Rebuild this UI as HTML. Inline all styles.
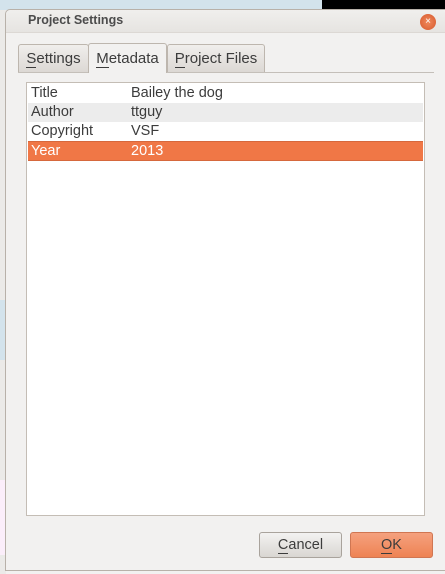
<!DOCTYPE html><html><head><style>
body{margin:0;width:445px;height:574px;overflow:hidden;background:#f2f1f0;position:relative;font-family:"Liberation Sans","DejaVu Sans",sans-serif;}
.abs{position:absolute}
.tab{position:absolute;top:44px;height:27px;border:1px solid #bdb6ae;border-bottom:none;background:linear-gradient(#f0eeec,#dcd8d4);font-size:15px;color:#3c3c3c;line-height:28px;text-align:center;border-radius:3px 3px 0 0}
.row{position:absolute;left:1px;right:1px;height:19px;font-size:14.5px;color:#3c3c3c;line-height:19px}
.row span{position:absolute}
.btn{position:absolute;top:532px;height:24px;width:81px;border:1px solid #a9a39c;border-radius:3px;font-size:14.5px;text-align:center;line-height:24px;color:#3c3c3c}
u{text-decoration:none;border-bottom:1px solid #3c3c3c}
</style></head><body>
<div class="abs" style="left:0;top:0;width:322px;height:10px;background:#d3e3ec"></div>
<div class="abs" style="left:322px;top:0;width:123px;height:10px;background:#000"></div>
<div class="abs" style="left:0;top:10px;width:6px;height:564px;background:#ebeae8"></div>
<div class="abs" style="left:0;top:300px;width:6px;height:60px;background:#d3e3ec"></div>
<div class="abs" style="left:0;top:480px;width:6px;height:75px;background:#fbeefa"></div>
<div class="abs" style="left:5px;top:9px;width:445px;height:560px;background:#f2f1f0;border:1px solid #b8b1a9;border-radius:5px 5px 0 0"></div>
<div class="abs" style="left:6px;top:10px;width:440px;height:22px;background:linear-gradient(#f0efed,#e6e4e1);border-radius:5px 5px 0 0;border-bottom:1px solid #dcd8d4"></div>
<div class="abs" style="left:28px;top:12px;font-size:12.5px;font-weight:bold;color:#4c4c4c;line-height:16px">Project Settings</div>
<div class="abs" style="left:420px;top:14px;width:16px;height:16px;border-radius:50%;background:radial-gradient(#f08a5d,#d6582c);color:#fff;font-size:10px;text-align:center;line-height:16px">×</div>
<div class="abs" style="left:18px;top:72px;width:416px;height:1px;background:#c4bfb9"></div>
<div class="tab" style="left:18px;width:69px"><u>S</u>ettings</div>
<div class="tab" style="left:88px;top:43px;height:29px;width:77px;background:#f2f1f0;line-height:30px;z-index:2"><u>M</u>etadata</div>
<div class="tab" style="left:167px;width:96px"><u>P</u>roject Files</div>
<div class="abs" style="left:26px;top:82px;width:397px;height:432px;background:#fff;border:1px solid #c4bdb5">
<div class="row" style="top:1px"><span style="left:3px">Title</span><span style="left:103px">Bailey the dog</span></div>
<div class="row" style="top:20px;background:#ececec"><span style="left:3px">Author</span><span style="left:103px">ttguy</span></div>
<div class="row" style="top:39px"><span style="left:3px">Copyright</span><span style="left:103px">VSF</span></div>
<div class="row" style="top:58px;background:#f07746;color:#fff;border-top:1px solid #d6683d;border-bottom:1px solid #d6683d;height:18px"><span style="left:3px">Year</span><span style="left:103px">2013</span></div>
</div>
<div class="btn" style="left:259px;background:linear-gradient(#f3f2f1,#d9d6d2)"><u>C</u>ancel</div>
<div class="btn" style="left:350px;background:linear-gradient(#f5a17e,#ee8354);border-color:#d07652"><u>O</u>K</div>
</body></html>
